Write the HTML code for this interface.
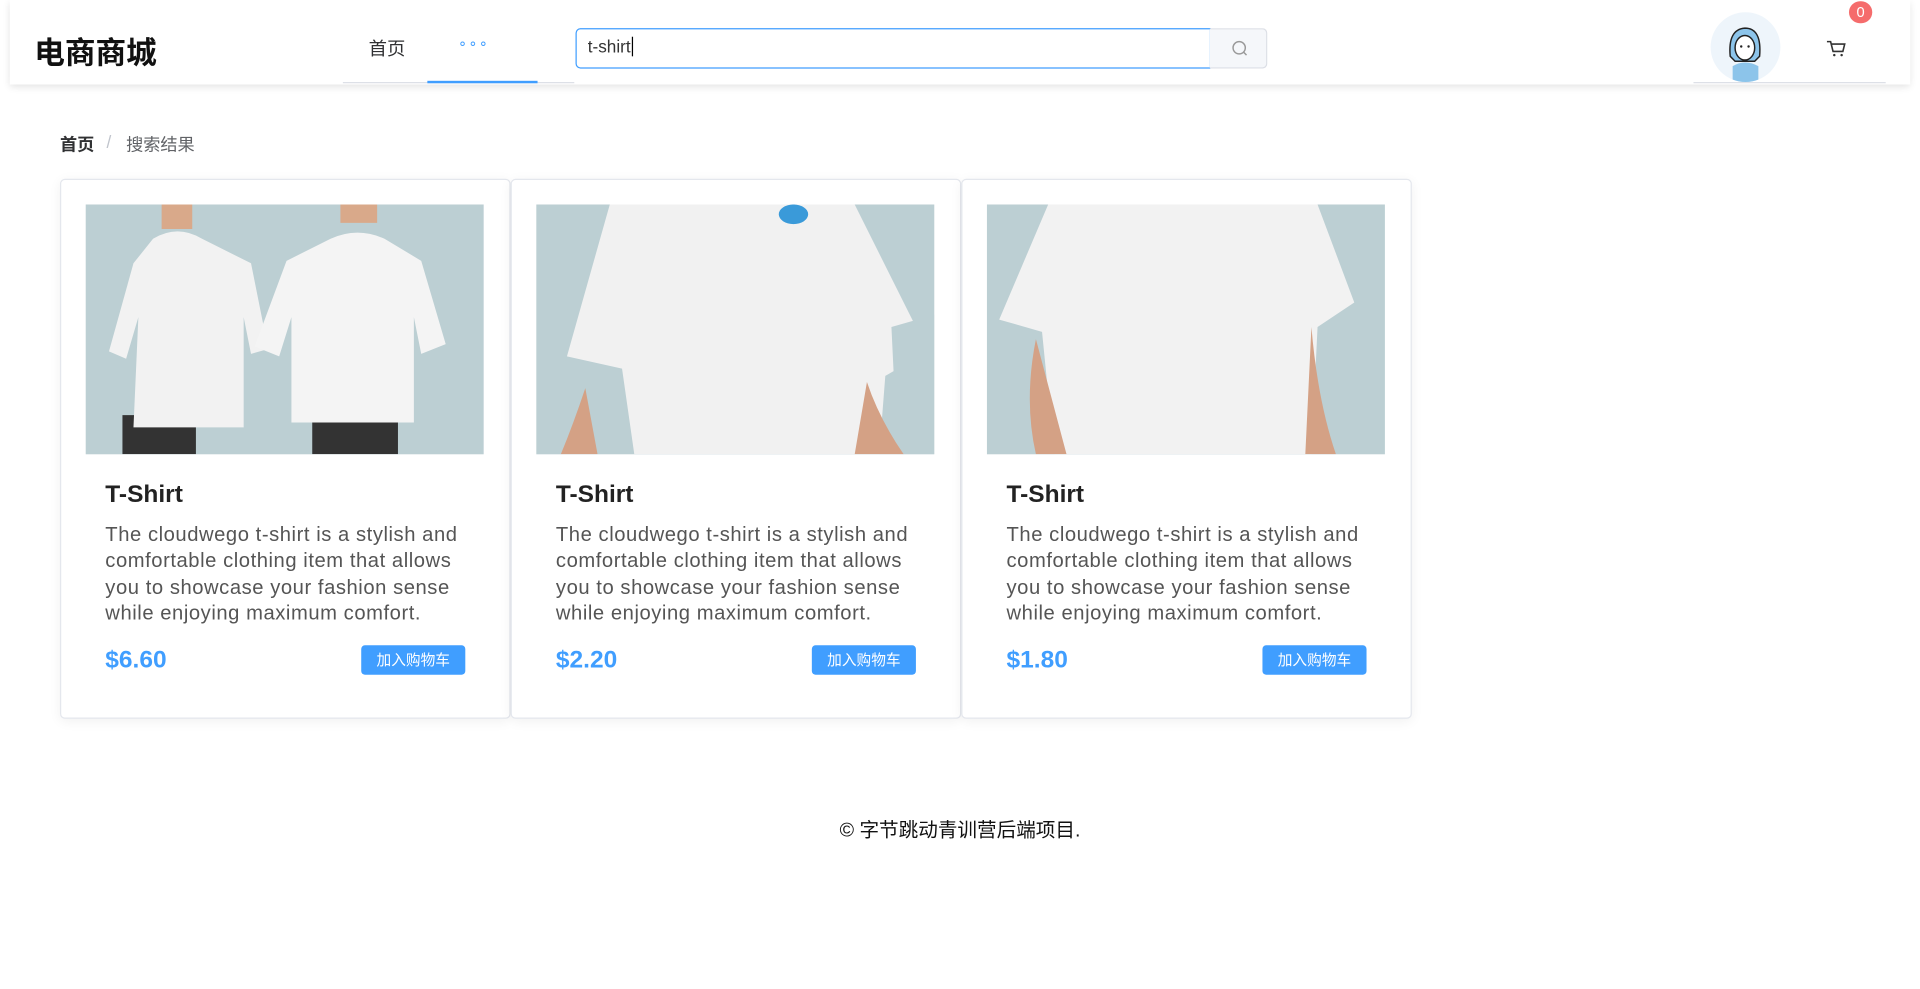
<!DOCTYPE html>
<html><head><meta charset="utf-8"><style>
html,body{margin:0;padding:0;background:#fff;overflow:hidden;width:1920px;height:989px}
#w{position:absolute;left:0;top:0;width:1568px;height:808px;transform:scale(1.22449);transform-origin:0 0;font-family:"Liberation Sans","Noto Sans CJK SC",sans-serif;color:#303133}
.a{position:absolute}
.hdr{left:8px;top:0;width:1552px;height:69px;background:#fff;box-shadow:0 2px 6px rgba(0,0,0,.12)}
.card{top:146px;width:366px;height:439px;border:1px solid #e4e7ed;border-radius:4px;background:#fff;box-shadow:0 2px 10px rgba(0,0,0,.06)}
.img{left:20px;top:20px;width:325px;height:204px;background:#bccfd3;overflow:hidden}
.t{left:36px;top:246px;font-size:20px;font-weight:bold;color:#222}
.d{left:36px;top:280px;width:300px;font-size:16.5px;line-height:21.3px;color:#555;letter-spacing:0.45px}
.p{left:36px;top:381px;font-size:20px;font-weight:bold;color:#409eff}
.b{left:245px;top:380px;width:85px;height:24px;background:#409eff;border-radius:3px;color:#fff;font-size:12px;text-align:center;line-height:24px}
</style></head><body><div id="w">
<div class="a hdr"></div>
<div class="a" style="left:28px;top:24px;font-size:25px;font-weight:bold;color:#111">电商商城</div>
<div class="a" style="left:301px;top:29px;font-size:15px;color:#303133">首页</div>
<div class="a" style="left:374px;top:28px;font-size:12px;color:#409eff;letter-spacing:1px">∘∘∘</div>
<div class="a" style="left:280px;top:67px;width:189px;height:1px;background:#dcdfe6"></div>
<div class="a" style="left:349px;top:66px;width:90px;height:2px;background:#409eff"></div>
<div class="a" style="left:470px;top:23px;width:517px;height:31px;border:1px solid #409eff;border-radius:4px 0 0 4px;background:#fff"></div>
<div class="a" style="left:480px;top:30px;font-size:14px;color:#333">t-shirt<span style="border-left:1px solid #000;margin-left:1px"></span></div>
<div class="a" style="left:988px;top:23px;width:46px;height:31px;border:1px solid #dcdfe6;border-left:none;border-radius:0 4px 4px 0;background:#f5f7fa"></div>
<svg class="a" style="left:1005px;top:32px" width="15" height="15" viewBox="0 0 15 15"><circle cx="7" cy="7" r="5" fill="none" stroke="#999" stroke-width="1.2"/><path d="M10.5 10.5L13 13" stroke="#999" stroke-width="1.2"/></svg>
<div class="a" style="left:1383px;top:67px;width:157px;height:1px;background:#dcdfe6"></div>
<div class="a" style="left:1397px;top:10px;width:57px;height:57px;border-radius:50%;background:#eef5fb;overflow:hidden">
<svg width="57" height="57" viewBox="0 0 57 57"><path d="M18 57V44q10-6 21 0v13z" fill="#8cc4ea"/><path d="M16 36q-2-22 12-23q14 0 12 23l-4 4h-16z" fill="#8cc4ea" stroke="#222" stroke-width="1.2"/><ellipse cx="28" cy="29" rx="8" ry="10" fill="#fff" stroke="#222" stroke-width="1.2"/><circle cx="25" cy="28" r="1" fill="#222"/><circle cx="31" cy="28" r="1" fill="#222"/></svg></div>
<svg class="a" style="left:1491px;top:32px" width="17" height="16" viewBox="0 0 17 16"><path d="M1 2h3l2 8h8l1.5-6H5" fill="none" stroke="#333" stroke-width="1.3"/><circle cx="7" cy="13" r="1" fill="#333"/><circle cx="13" cy="13" r="1" fill="#333"/></svg>
<div class="a" style="left:1510px;top:1px;width:19px;height:18px;border-radius:9px;background:#f56c6c;color:#fff;font-size:12px;text-align:center;line-height:18px">0</div>
<div class="a" style="left:49px;top:108px;font-size:14px;font-weight:bold;color:#303133">首页</div>
<div class="a" style="left:87px;top:108px;font-size:14px;color:#c0c4cc">/</div>
<div class="a" style="left:103px;top:108px;font-size:14px;color:#606266">搜索结果</div>

<div class="a card" style="left:49px"><div class="a img"><svg width="325" height="204" viewBox="0 0 325 204"><path d="M30 172h60v32h-60zM185 172h70v32h-70z" fill="#333"/><path d="M55 28q20-12 40 0l40 20 14 70-14 4-6-30 0 90h-90l4-90-10 34-14-6 20-72z" fill="#f2f2f2"/><path d="M200 28q22-10 44 0l30 18 20 68-20 8-6-30v86h-100v-86l-10 32-20-8 26-70z" fill="#f4f4f4"/><path d="M62 0h25v20h-25zM208 0h30v15h-30z" fill="#d9a98a"/></svg></div>
<div class="a t">T-Shirt</div><div class="a d">The cloudwego t-shirt is a stylish and comfortable clothing item that allows you to showcase your fashion sense while enjoying maximum comfort.</div><div class="a p">$6.60</div><div class="a b">加入购物车</div></div>
<div class="a card" style="left:417px"><div class="a img"><svg width="325" height="204" viewBox="0 0 325 204"><path d="M60 0h200l60 120-35 20-5 64h-200l-10-70-45-10z" fill="#f1f1f1"/><path d="M0 0h30l-10 204h-20zM290 100l35-10v114h-30z" fill="#bccfd3"/><path d="M270 145q10 30 30 59h-40zM40 150q-10 30-20 54h30z" fill="#d4a185"/><ellipse cx="210" cy="8" rx="12" ry="8" fill="#3a9ad9"/></svg></div>
<div class="a t">T-Shirt</div><div class="a d">The cloudwego t-shirt is a stylish and comfortable clothing item that allows you to showcase your fashion sense while enjoying maximum comfort.</div><div class="a p">$2.20</div><div class="a b">加入购物车</div></div>
<div class="a card" style="left:785px"><div class="a img"><svg width="325" height="204" viewBox="0 0 325 204"><path d="M50 0h220l30 80-30 20-5 104h-210l-10-100-35-10z" fill="#f2f2f2"/><path d="M40 110q-10 50 0 94h25zM265 100q5 60 20 104h-25z" fill="#d4a185"/></svg></div>
<div class="a t">T-Shirt</div><div class="a d">The cloudwego t-shirt is a stylish and comfortable clothing item that allows you to showcase your fashion sense while enjoying maximum comfort.</div><div class="a p">$1.80</div><div class="a b">加入购物车</div></div>

<div class="a" style="left:0;width:1568px;top:664px;text-align:center;font-size:16px;color:#111">© 字节跳动青训营后端项目.</div>
</div></body></html>
